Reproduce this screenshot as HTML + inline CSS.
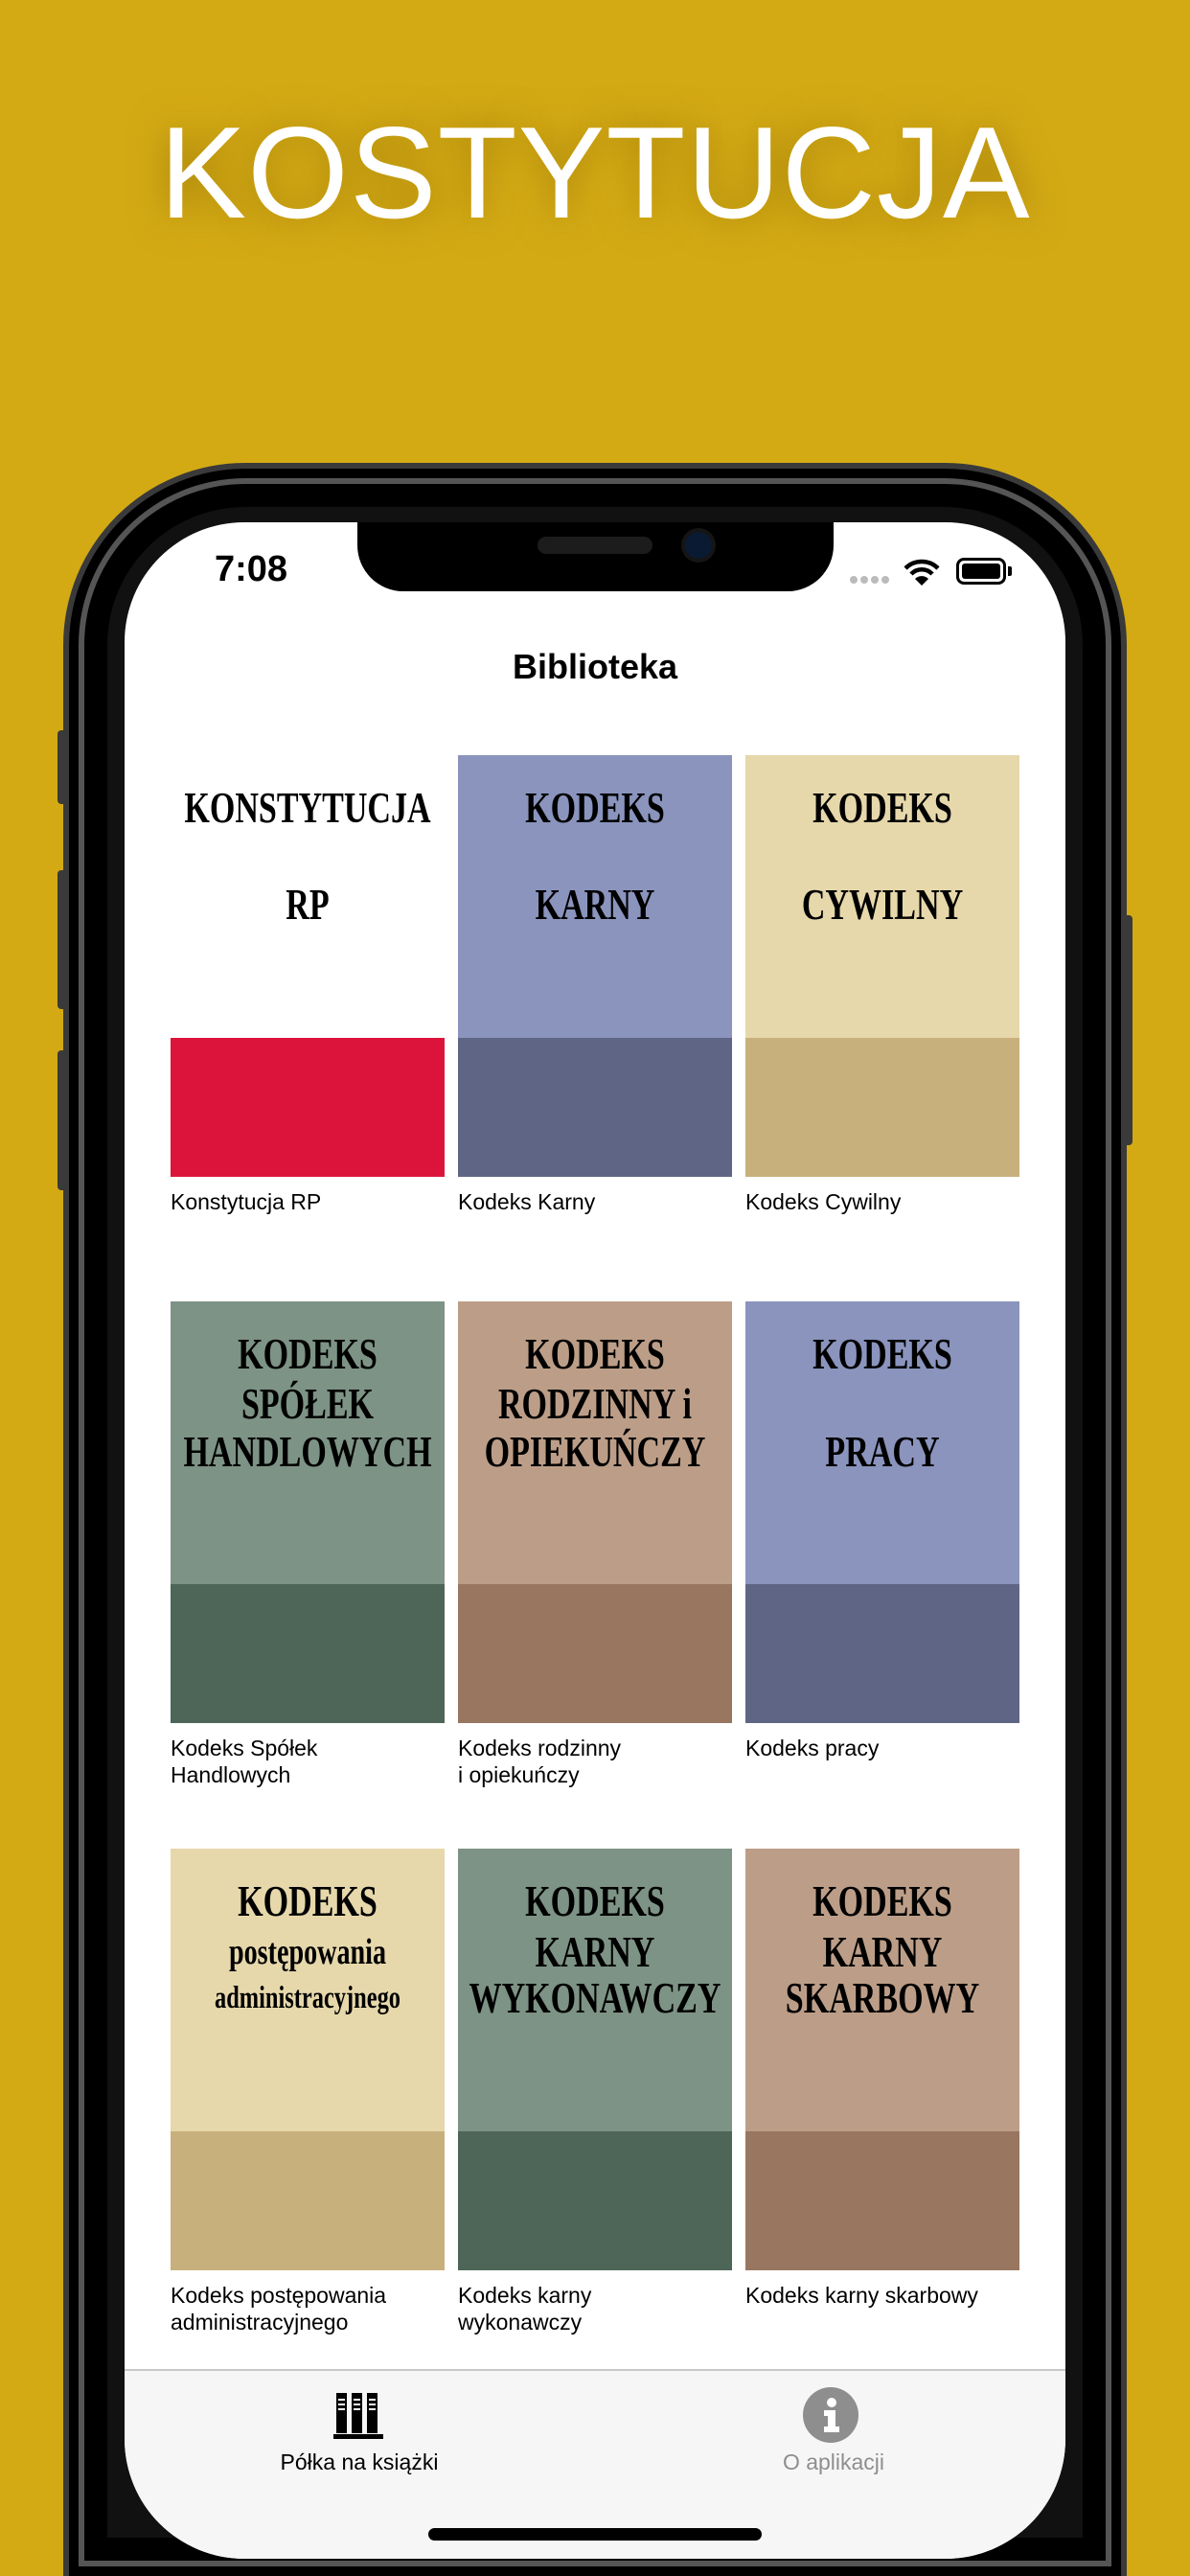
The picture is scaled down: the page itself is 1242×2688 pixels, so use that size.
<!DOCTYPE html>
<html style="width:1242px;height:2688px;overflow:hidden"><head><meta charset="utf-8"><style>
*{margin:0;padding:0;box-sizing:border-box}
body{width:1242px;height:2688px;background:#d4aa14;position:relative;overflow:hidden;font-family:"Liberation Sans",sans-serif}
.title{position:absolute;left:0;width:1242px;top:105px;text-align:center;font-size:136px;color:#fff;line-height:150px;text-shadow:0 0 40px rgba(120,90,0,.6);letter-spacing:1px}
.phone{position:absolute;left:66px;top:483px;width:1110px;height:2205px;border-radius:190px 190px 0 0;background:#111;border:6px solid #3a3a3a;border-bottom:none;box-shadow:inset 0 0 0 10px #000,inset 0 0 0 16px #555,inset 0 0 0 40px #000}
.btn{position:absolute;background:#3a3a3a;border-radius:4px;width:10px}
.screen{position:absolute;left:130px;top:545px;width:982px;height:2125px;border-radius:125px;background:#fff;overflow:hidden}
.notch{position:absolute;left:243px;top:-5px;width:497px;height:77px;background:#000;border-radius:0 0 48px 48px}
.time{position:absolute;left:94px;top:28px;font-size:38px;font-weight:600;color:#000}
.hdr{position:absolute;left:0;width:982px;top:130px;text-align:center;font-size:36px;font-weight:600}
.cov{position:absolute;width:286px;height:440px;overflow:hidden}
.cov .b{position:absolute;left:0;right:0;top:295px;bottom:0}
.ln{position:absolute;left:-50px;right:-50px;height:60px;line-height:60px;text-align:center;font-family:"Liberation Serif",serif;font-weight:bold;font-size:46px;transform:scaleX(.74);color:#000;white-space:nowrap}
.lab{position:absolute;width:290px;font-size:23px;line-height:28px;color:#000}
.tab{position:absolute;left:0;top:1927px;width:982px;height:400px;background:#f6f6f6;border-top:2px solid #c8c8c8}
.home{position:absolute;left:317px;top:2093px;width:348px;height:13px;border-radius:7px;background:#000}
</style></head><body>
<div class="title">KOSTYTUCJA</div>
<div class="btn" style="left:60px;top:762px;height:77px"></div>
<div class="btn" style="left:60px;top:908px;height:145px"></div>
<div class="btn" style="left:60px;top:1096px;height:146px"></div>
<div class="btn" style="left:1172px;top:955px;height:240px"></div>
<div class="phone"></div>
<div class="screen">
 <div class="notch"><div style="position:absolute;left:188px;top:20px;width:120px;height:18px;border-radius:9px;background:#1c1c1c"></div><div style="position:absolute;left:342px;top:15px;width:28px;height:28px;border-radius:50%;background:#0b1a33;box-shadow:0 0 0 4px #151515"></div></div>
 <div class="time">7:08</div>
 <div style="position:absolute;left:757px;top:56px;display:flex;gap:3px"><i style="width:8px;height:8px;border-radius:50%;background:#bbb;display:block"></i><i style="width:8px;height:8px;border-radius:50%;background:#bbb;display:block"></i><i style="width:8px;height:8px;border-radius:50%;background:#bbb;display:block"></i><i style="width:8px;height:8px;border-radius:50%;background:#bbb;display:block"></i></div>
 <svg style="position:absolute;left:813px;top:38px" width="38" height="30" viewBox="0 0 38 30"><path d="M2 10 A24 24 0 0 1 36 10" stroke="#000" stroke-width="4.5" fill="none"/><path d="M8 16 A15 15 0 0 1 30 16" stroke="#000" stroke-width="4.5" fill="none"/><path d="M19 28 L12 21 A10 10 0 0 1 26 21 Z" fill="#000"/></svg>
 <div style="position:absolute;left:868px;top:37px;width:52px;height:28px;border:3px solid #000;border-radius:8px;padding:3px"><div style="width:100%;height:100%;background:#000;border-radius:3px"></div></div>
 <div style="position:absolute;left:922px;top:46px;width:4px;height:10px;background:#000;border-radius:0 2px 2px 0"></div>
 <div class="hdr">Biblioteka</div>

 <div class="cov" style="left:48px;top:243px;background:#fff"><div class="ln" style="top:25px">KONSTYTUCJA</div><div class="ln" style="top:126px">RP</div><div class="b" style="background:#dc143c"></div></div>
 <div class="cov" style="left:348px;top:243px;background:#8a94bd"><div class="ln" style="top:25px">KODEKS</div><div class="ln" style="top:126px">KARNY</div><div class="b" style="background:#5f6685"></div></div>
 <div class="cov" style="left:648px;top:243px;background:#e6d8ab"><div class="ln" style="top:25px">KODEKS</div><div class="ln" style="top:126px">CYWILNY</div><div class="b" style="background:#c8b07c"></div></div>
 <div class="lab" style="left:48px;top:695px">Konstytucja RP</div>
 <div class="lab" style="left:348px;top:695px">Kodeks Karny</div>
 <div class="lab" style="left:648px;top:695px">Kodeks Cywilny</div>

 <div class="cov" style="left:48px;top:813px;background:#7d9385"><div class="ln" style="top:25px">KODEKS</div><div class="ln" style="top:77px">SPÓŁEK</div><div class="ln" style="top:127px">HANDLOWYCH</div><div class="b" style="background:#4d6657"></div></div>
 <div class="cov" style="left:348px;top:813px;background:#bc9e88"><div class="ln" style="top:25px">KODEKS</div><div class="ln" style="top:77px">RODZINNY i</div><div class="ln" style="top:127px">OPIEKUŃCZY</div><div class="b" style="background:#997660"></div></div>
 <div class="cov" style="left:648px;top:813px;background:#8a94bd"><div class="ln" style="top:25px">KODEKS</div><div class="ln" style="top:127px">PRACY</div><div class="b" style="background:#5f6685"></div></div>
 <div class="lab" style="left:48px;top:1265px">Kodeks Spółek<br>Handlowych</div>
 <div class="lab" style="left:348px;top:1265px">Kodeks rodzinny<br>i opiekuńczy</div>
 <div class="lab" style="left:648px;top:1265px">Kodeks pracy</div>

 <div class="cov" style="left:48px;top:1384px;background:#e6d8ab"><div class="ln" style="top:25px">KODEKS</div><div class="ln" style="top:78px;font-size:38px">postępowania</div><div class="ln" style="top:126px;font-size:33px">administracyjnego</div><div class="b" style="background:#c8b07c"></div></div>
 <div class="cov" style="left:348px;top:1384px;background:#7d9385"><div class="ln" style="top:25px">KODEKS</div><div class="ln" style="top:78px">KARNY</div><div class="ln" style="top:126px">WYKONAWCZY</div><div class="b" style="background:#4d6657"></div></div>
 <div class="cov" style="left:648px;top:1384px;background:#bc9e88"><div class="ln" style="top:25px">KODEKS</div><div class="ln" style="top:78px">KARNY</div><div class="ln" style="top:126px">SKARBOWY</div><div class="b" style="background:#997660"></div></div>
 <div class="lab" style="left:48px;top:1836px">Kodeks postępowania<br>administracyjnego</div>
 <div class="lab" style="left:348px;top:1836px">Kodeks karny<br>wykonawczy</div>
 <div class="lab" style="left:648px;top:1836px">Kodeks karny skarbowy</div>

 <div class="tab">
  <svg style="position:absolute;left:218px;top:23px" width="54" height="48" viewBox="0 0 54 48"><g fill="#000"><rect x="3" y="0" width="11" height="42"/><rect x="19" y="0" width="11" height="42"/><rect x="35" y="0" width="11" height="42"/><rect x="0" y="43" width="52" height="5"/></g><g fill="#fff"><rect x="5" y="6" width="7" height="2"/><rect x="5" y="11" width="7" height="2"/><rect x="5" y="16" width="7" height="2"/><rect x="21" y="6" width="7" height="2"/><rect x="21" y="11" width="7" height="2"/><rect x="21" y="16" width="7" height="2"/><rect x="37" y="6" width="7" height="2"/><rect x="37" y="11" width="7" height="2"/><rect x="37" y="16" width="7" height="2"/></g></svg>
  <div style="position:absolute;left:115px;top:82px;width:260px;text-align:center;font-size:23px;font-weight:500">Półka na książki</div>
  <svg style="position:absolute;left:707px;top:16px" width="60" height="60" viewBox="0 0 60 60"><circle cx="30" cy="30" r="29" fill="#8e8e8e"/><circle cx="31" cy="17" r="5" fill="#fff"/><path d="M23 25 H35 V42 H39 V48 H23 V42 H27 V31 H23 Z" fill="#fff"/></svg>
  <div style="position:absolute;left:610px;top:82px;width:260px;text-align:center;font-size:23px;color:#8e8e8e">O aplikacji</div>
 </div>
 <div class="home"></div>
</div>
</body></html>
